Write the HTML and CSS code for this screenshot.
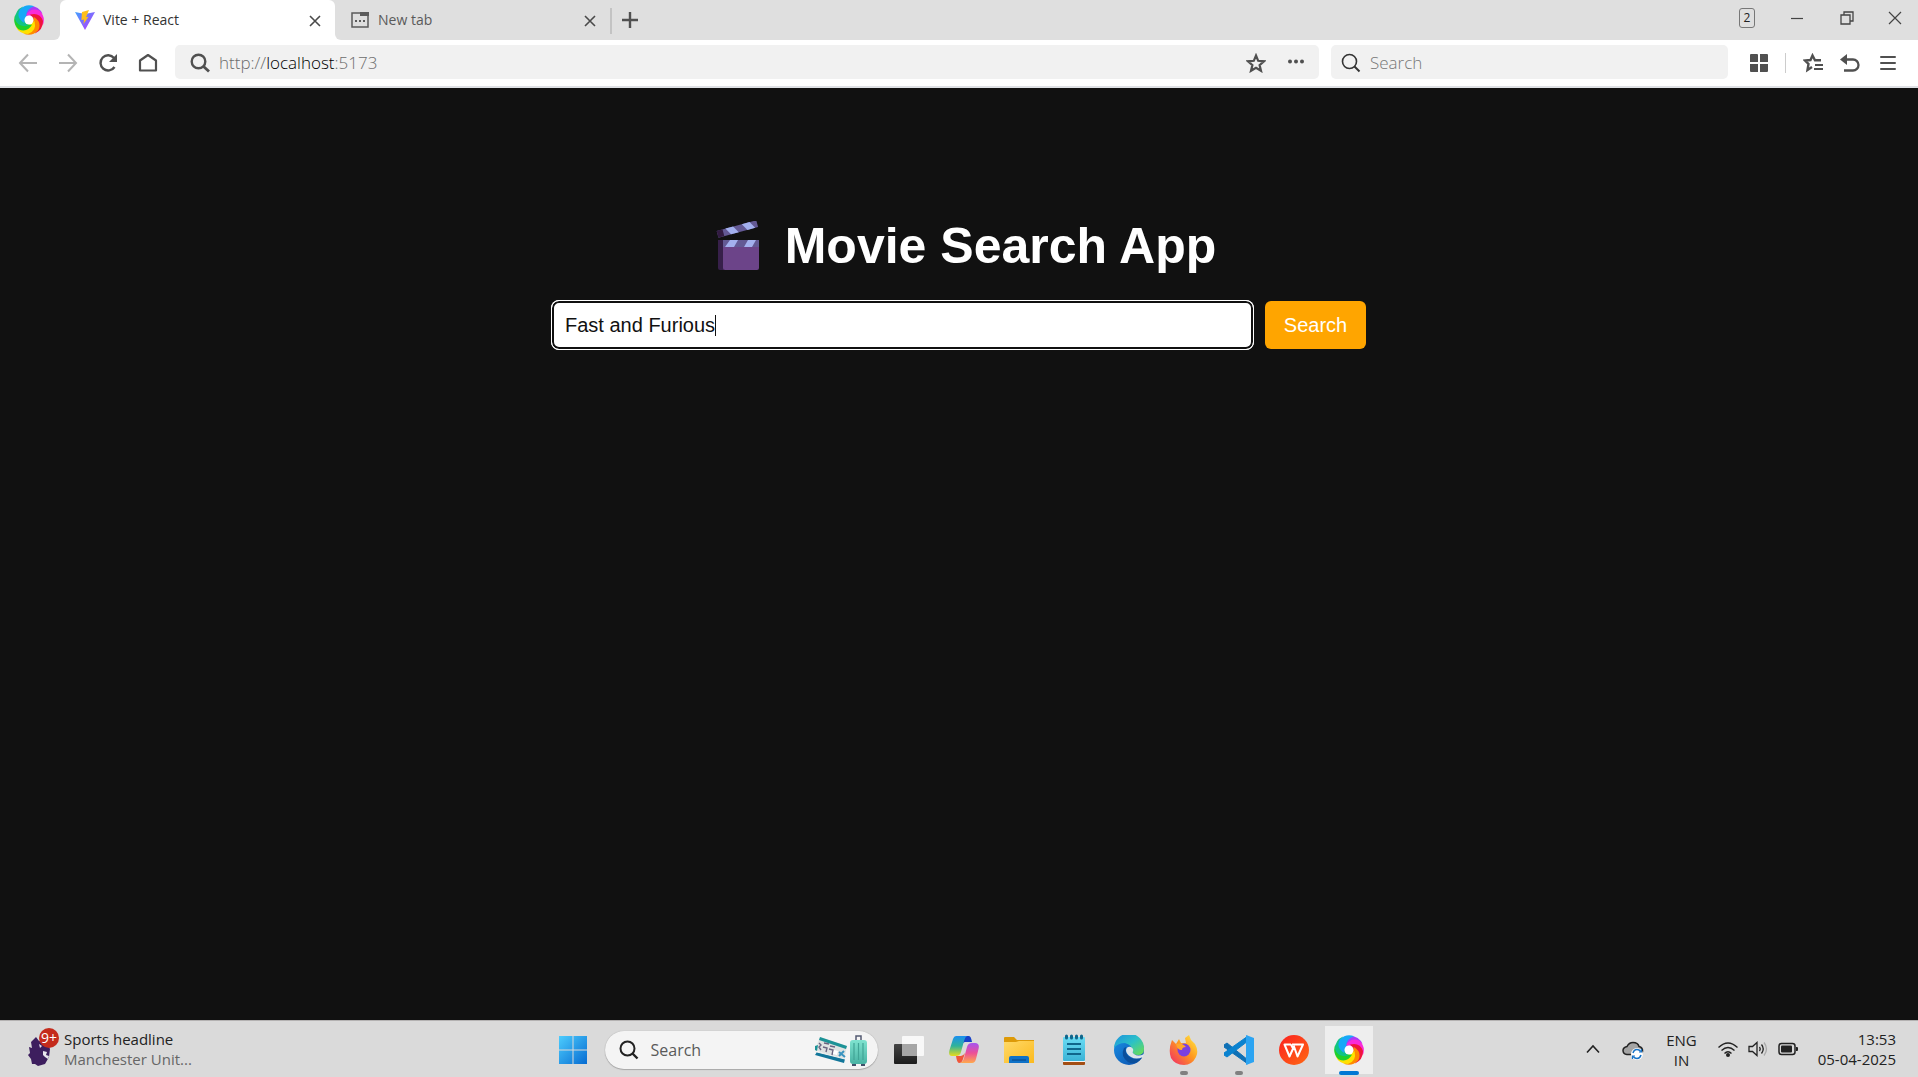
FILE: index.html
```html
<!DOCTYPE html>
<html lang="en">
<head>
<meta charset="utf-8">
<title>Vite + React</title>
<meta name="viewport" content="width=device-width, initial-scale=1">
<link rel="stylesheet" href="styles.css">
</head>
<body>
<svg class="defs" aria-hidden="true">
  <defs>
    <path id="blade" d="M9.500 14Q7 4 16 1Q25 1 28.500 9Q21 5 15.500 10.500Q12 11 9.500 14z"/>
    <symbol id="swirl" viewBox="0 0 30 30">
      <use href="#blade" fill="#a63cf8"/>
      <use href="#blade" fill="#f92ad8" transform="rotate(45 15 15)"/>
      <use href="#blade" fill="#f0143c" transform="rotate(90 15 15)"/>
      <use href="#blade" fill="#ff8a00" transform="rotate(135 15 15)"/>
      <use href="#blade" fill="#ffe100" transform="rotate(180 15 15)"/>
      <use href="#blade" fill="#1fd02c" transform="rotate(225 15 15)"/>
      <use href="#blade" fill="#10c486" transform="rotate(270 15 15)"/>
      <use href="#blade" fill="#18a8f8" transform="rotate(315 15 15)"/>
      <circle cx="15" cy="15" r="4.500" fill="#fff"/>
    </symbol>
    <symbol id="close" viewBox="0 0 12 12"><path d="M1 1l10 10M11 1L1 11" stroke="#4a4a4a" stroke-width="1.6" fill="none"/></symbol>
    <linearGradient id="vite-a" x1="0" y1="0" x2="1" y2="1"><stop offset="0" stop-color="#41a1ff"/><stop offset="1" stop-color="#bd34fe"/></linearGradient>
    <linearGradient id="win" gradientUnits="userSpaceOnUse" x1="0" y1="0" x2="30" y2="30"><stop offset="0" stop-color="#4fd0ff"/><stop offset="1" stop-color="#0468d0"/></linearGradient>
    <linearGradient id="cop-a" x1="0" y1="0" x2="0" y2="1"><stop offset="0" stop-color="#1a8ff0"/><stop offset=".5" stop-color="#2fb39a"/><stop offset="1" stop-color="#e8dc1c"/></linearGradient>
    <linearGradient id="cop-b" x1="0" y1="0" x2="0" y2="1"><stop offset="0" stop-color="#a553f0"/><stop offset=".5" stop-color="#ec4f98"/><stop offset="1" stop-color="#ffa94d"/></linearGradient>
    <linearGradient id="fold" x1="0" y1="0" x2="1" y2="1"><stop offset="0" stop-color="#ffd968"/><stop offset="1" stop-color="#fbba1e"/></linearGradient>
    <linearGradient id="pad" x1="0" y1="0" x2="0" y2="1"><stop offset="0" stop-color="#6adcf4"/><stop offset="1" stop-color="#3bb3d6"/></linearGradient>
    <linearGradient id="edge-a" x1="0" y1="0" x2="1" y2="1"><stop offset="0" stop-color="#1c8fe0"/><stop offset=".5" stop-color="#2bc0c8"/><stop offset="1" stop-color="#6fe04a"/></linearGradient>
    <linearGradient id="edge-b" x1="0" y1="0" x2="1" y2="1"><stop offset="0" stop-color="#1a93e8"/><stop offset="1" stop-color="#0a4ba8"/></linearGradient>
    <linearGradient id="fox" x1="1" y1="0" x2="0" y2="1"><stop offset="0" stop-color="#fff04a"/><stop offset=".45" stop-color="#ff9a1e"/><stop offset="1" stop-color="#f0246c"/></linearGradient>
    <linearGradient id="wps" x1="0" y1="0" x2="1" y2="1"><stop offset="0" stop-color="#fb2020"/><stop offset="1" stop-color="#ff6a14"/></linearGradient>
    <linearGradient id="tv" x1="0" y1="0" x2="0" y2="1"><stop offset="0" stop-color="#444"/><stop offset="1" stop-color="#1c1c1c"/></linearGradient>
    <linearGradient id="bag" x1="0" y1="0" x2="0" y2="1"><stop offset="0" stop-color="#7fe3cf"/><stop offset="1" stop-color="#49b3a4"/></linearGradient>
  </defs>
</svg>

<header class="browser">
  <div class="tabstrip">
    <button class="app-logo" aria-label="Browser menu"><svg width="30" height="30"><use href="#swirl"/></svg></button>
    <div class="tab tab-active">
      <svg width="20" height="20" viewBox="0 0 20 20" aria-hidden="true"><path d="M0 2L10 20L20 2L10 4z" fill="url(#vite-a)"/><path d="M14 0L7 2L6.400 10L9 9.500L8.500 14L13.500 6.800L11 7.200z" fill="#ffbf1c"/></svg>
      <span class="tab-title">Vite + React</span>
      <button class="tab-close" aria-label="Close tab"><svg width="12" height="12"><use href="#close"/></svg></button>
    </div>
    <div class="tab">
      <svg width="18" height="16" viewBox="0 0 18 16" aria-hidden="true"><path d="M1 1h16v14H1z" fill="none" stroke="#5c5c5c" stroke-width="1.500"/><path d="M9 0h9v4H9z" fill="#5c5c5c"/><path d="M4 8h2v2H4zM8 8h2v2H8zM12 8h2v2h-2z" fill="#5c5c5c"/></svg>
      <span class="tab-title">New tab</span>
      <button class="tab-close" aria-label="Close tab"><svg width="12" height="12"><use href="#close"/></svg></button>
    </div>
    <button class="new-tab" aria-label="New tab"><svg width="16" height="16" viewBox="0 0 16 16"><path d="M8 0v16M0 8h16" stroke="#505050" stroke-width="2.400"/></svg></button>
    <div class="window-controls">
      <button class="tab-count" aria-label="Open tabs">2</button>
      <button aria-label="Minimise"><svg width="14" height="14" viewBox="0 0 14 14"><path d="M1 7.500h12" stroke="#444" stroke-width="1.200"/></svg></button>
      <button aria-label="Restore"><svg width="14" height="14" viewBox="0 0 14 14"><path d="M1 4h9v9H1zM4 4V1h9v9h-3" fill="none" stroke="#444" stroke-width="1.300"/></svg></button>
      <button aria-label="Close"><svg width="14" height="14" viewBox="0 0 14 14"><path d="M1 1l12 12M13 1L1 13" stroke="#444" stroke-width="1.200"/></svg></button>
    </div>
  </div>
  <div class="toolbar">
    <nav class="nav">
      <button aria-label="Back"><svg width="20" height="20" viewBox="0 0 20 20"><path d="M19 10H2M10 1.500L2 10l8 8.500" fill="none" stroke="#b4b4b4" stroke-width="2"/></svg></button>
      <button aria-label="Forward"><svg width="20" height="20" viewBox="0 0 20 20"><path d="M1 10h17M10 1.500l8 8.500l-8 8.500" fill="none" stroke="#b4b4b4" stroke-width="2"/></svg></button>
      <button aria-label="Reload"><svg width="20" height="20" viewBox="0 0 20 20"><path d="M16 5A7.600 7.600 0 1 0 16.500 14" fill="none" stroke="#505050" stroke-width="2.400"/><path d="M19 1v8h-8z" fill="#505050"/></svg></button>
      <button aria-label="Home"><svg width="20" height="20" viewBox="0 0 20 20"><path d="M2 7.500L10 2l8 5.500V17.500H2z" fill="none" stroke="#505050" stroke-width="2.200" stroke-linejoin="round"/></svg></button>
    </nav>
    <div class="address">
      <svg width="20" height="20" viewBox="0 0 20 20" aria-hidden="true"><circle cx="8.500" cy="8.500" r="6.800" fill="none" stroke="#505050" stroke-width="2.400"/><path d="M13 13l6 5.500" stroke="#505050" stroke-width="2.800"/></svg>
      <a class="url" href="#">http://<span class="host">localhost</span>:5173</a>
      <button aria-label="Bookmark"><svg width="20" height="20" viewBox="0 0 20 20"><path d="M10 2.500l2.200 5.300 5.800.5-4.400 3.800 1.400 5.700-5-3.100-5 3.100 1.400-5.700L2 8.300l5.800-.5z" fill="none" stroke="#505050" stroke-width="2.200"/></svg></button>
      <button aria-label="More"><svg width="18" height="20" viewBox="0 0 18 20"><circle cx="3" cy="8.500" r="2" fill="#505050"/><circle cx="9" cy="8.500" r="2" fill="#505050"/><circle cx="15" cy="8.500" r="2" fill="#505050"/></svg></button>
    </div>
    <label class="quick-search">
      <svg width="20" height="20" viewBox="0 0 20 20" aria-hidden="true"><circle cx="8.500" cy="8.500" r="7" fill="none" stroke="#333" stroke-width="1.600"/><path d="M13.500 13.500l5 5" stroke="#333" stroke-width="2"/></svg>
      <input type="text" placeholder="Search" aria-label="Search the web">
    </label>
    <div class="tools">
      <button aria-label="Apps"><svg width="18" height="18" viewBox="0 0 18 18"><path d="M1 0h6q1 0 1 1v7H0V1q0-1 1-1zM10 0h7q1 0 1 1v7h-8zM0 10h8v8H1q-1 0-1-1zM10 10h8v7q0 1-1 1h-7z" fill="#505050"/></svg></button>
      <span class="divider"></span>
      <button aria-label="Favourites"><svg width="20" height="20" viewBox="0 0 20 20"><path d="M18 7.300h-6L9.500 2.500 7.500 7 2 7.500l3.500 3.500L4.500 17l4.500-3" fill="none" stroke="#505050" stroke-width="2.400"/><path d="M12 12h8M11 16h9" stroke="#505050" stroke-width="2.200"/></svg></button>
      <button aria-label="Undo"><svg width="20" height="20" viewBox="0 0 20 20"><path d="M3 6.500h10a5.500 5.500 0 0 1 0 11H4" fill="none" stroke="#505050" stroke-width="2.300"/><path d="M0 6.500L7 1v11z" fill="#505050"/></svg></button>
      <button class="menu" aria-label="Menu"><svg width="16" height="16" viewBox="0 0 16 16"><path d="M1 2h14M1 8h14M1 14h14" stroke="#505050" stroke-width="2" stroke-linecap="round"/></svg></button>
    </div>
  </div>
</header>

<main class="page">
  <h1 class="title">
    <svg width="69" height="50" viewBox="0 0 69 50" aria-hidden="true">
      <g transform="translate(1 -1)">
        <g transform="rotate(-15 14 16)">
          <path d="M15 11h41v7H15z" fill="#635994"/><path d="M15 11h6v7h-6z" fill="#321b41"/>
          <path d="M24 11h8l4 7h-8zM41 11h8l4 7h-8z" fill="#a3b0ee"/>
        </g>
        <path d="M15 20h6v30h-4q-2 0-2-2z" fill="#37204a"/>
        <path d="M20 20h36v28q0 2-2 2H22q-2 0-2-2z" fill="#6c4489"/>
        <path d="M20 20h36v7H20z" fill="#635994"/>
        <path d="M27 20h8l-4 7h-9zM45 20h8l-4 7h-8z" fill="#a3b0ee"/>
      </g>
    </svg>
    Movie Search App
  </h1>
  <form class="search-form" onsubmit="return false">
    <div class="field"><input type="text" class="movie-input" value="Fast and Furious" aria-label="Movie title"><span class="caret" aria-hidden="true"></span></div>
    <button class="movie-button" type="submit">Search</button>
  </form>
</main>

<footer class="taskbar">
  <button class="widget">
    <span class="crest">
      <svg width="26" height="32" viewBox="0 0 26 32" aria-hidden="true"><path d="M4 8l5-5 3 4 8 1 3 7-1 8-4 7-7 2-3-2-3 0-1-5-3-4 2-2-1-6 3 1z" fill="#3d1e5e"/><path d="M16 17l4 1-1 3 3 1-1 3-3-2-2-2zM12 10l3 2-2 2z" fill="#e8e4ee"/></svg>
      <span class="badge">9+</span>
    </span>
    <span class="widget-text"><span class="headline">Sports headline</span><span class="subline">Manchester Unit...</span></span>
  </button>
  <div class="dock">
    <button class="app" aria-label="Start"><svg width="30" height="30" viewBox="0 0 30 30"><path d="M1 1h13.500v13.500H1zM15.500 1H29v13.500H15.500zM1 15.500h13.500V29H1zM15.500 15.500H29V29H15.500z" fill="url(#win)"/></svg></button>
    <label class="task-search">
      <svg width="20" height="20" viewBox="0 0 20 20" aria-hidden="true"><circle cx="8.500" cy="8.500" r="7" fill="none" stroke="#222" stroke-width="2"/><path d="M13.500 13.500l5 5" stroke="#222" stroke-width="2.400"/></svg>
      <input type="text" placeholder="Search" aria-label="Search Windows">
      <svg width="54" height="32" viewBox="0 0 54 32" aria-hidden="true">
        <path d="M6 3l27 9-3 14L1 16z" fill="#dfe3e2"/><path d="M6 3l27 9-1 3L5 6z" fill="#1c9296"/><path d="M1 12l3-1-1 6-2-1z" fill="#1c9296"/>
        <path d="M3 18l28 7-1 4L1 21z" fill="#12769a"/><path d="M3 18l28 7" stroke="#f4f4f2"/>
        <path d="M5 9l2 2-2 2 2 3M10 9l5 1M9 13l4 1-1 4M16 12l5 1M15 15l4 1-1 5" stroke="#6a6480" stroke-width="1.400" fill="none"/><path d="M20 16l4 1-1 4-4-1z" fill="#fff"/><path d="M25 18l6 5M30 17l-5 5" stroke="#3b94c0" stroke-width="2"/>
        <path d="M42 7V2h5v5" fill="none" stroke="#535a72" stroke-width="1.500"/><rect x="36" y="6" width="17" height="24" rx="3" fill="url(#bag)"/><path d="M40 9v17M44.500 9v17M49 9v17" stroke="#41a596" stroke-width="1.200"/><path d="M38 30h4v2h-4zM47 30h4v2h-4z" fill="#41506a"/>
      </svg>
    </label>
    <button class="app" aria-label="Task view"><svg width="30" height="30" viewBox="0 0 30 30"><rect x="0" y="9" width="23" height="20" rx="1" fill="url(#tv)"/><rect x="8" y="1" width="22" height="20" rx="1" fill="#fff" opacity=".8"/><path d="M8 9h15v12H8z" fill="#a6a6a6"/></svg></button>
    <button class="app" aria-label="Copilot"><svg width="30" height="30" viewBox="0 0 30 30"><path d="M16 1h4q2 0 3 6h-7q-3 0-4 6z" fill="#1742c8"/><path d="M7 1h11q-2 1-3 5l-3 11q-1 4-5 4H3q-4 0-2.500-6L4 4q1-3 3-3z" fill="url(#cop-a)"/><path d="M23 8h3q5 0 3.500 6L27 24q-1 4-4 4H11q3-1 4-5l3-11q1-4 5-4z" fill="url(#cop-b)"/><path d="M7 21h5q2 0 4-3l-2 6q-1 4-4 4-2 0-3-7z" fill="#f0563a"/></svg></button>
    <button class="app" aria-label="File Explorer"><svg width="30" height="30" viewBox="0 0 30 30"><path d="M0 3q0-1 1-1h9l3 3h17v5H0z" fill="#dd9a08"/><path d="M0 7h12l3-1h15v22H0z" fill="url(#fold)"/><path d="M5 28v-5q0-2 2-2h16q2 0 2 2v5z" fill="#0f72c8"/><path d="M8 25h14" stroke="#0a4b8c" stroke-width="1.200"/></svg></button>
    <button class="app" aria-label="Notepad"><svg width="30" height="32" viewBox="0 0 30 32"><path d="M4 28h22v2q0 1-1 1H5q-1 0-1-1z" fill="#a34e14"/><path d="M4 26h22v2H4z" fill="#f4f4f4"/><rect x="4" y="3" width="22" height="24" rx="1" fill="url(#pad)"/><path d="M8 10h14M8 15h14M8 20h14" stroke="#10668c" stroke-width="2"/><path d="M7.500 2v2M12.500 2v2M17.500 2v2M22.500 2v2" stroke="#10668c" stroke-width="3" stroke-linecap="round"/></svg></button>
    <button class="app" aria-label="Edge"><svg width="30" height="30" viewBox="0 0 30 30"><circle cx="15" cy="15" r="15" fill="url(#edge-b)"/><path d="M0 13A15 15 0 0 1 30 14Q30 20 24 20Q18 20 19 16Q18 10 11 8Q4 8 0 13z" fill="url(#edge-a)"/><path d="M10 13q-4 8 4 14 6 3 11-1l3-3q-6 2-11 0-7-4-5-11z" fill="#0a4f9c"/><path d="M12 15q1-4 5-3 3 2 2 4-1 2 1 3 4 3 10 0l-1 3q-7 3-12 0-5-3-5-7z" fill="#dce4ea"/></svg></button>
    <button class="app running" aria-label="Firefox"><svg width="30" height="30" viewBox="0 0 30 30"><path d="M3 5l4 4 3-5 2 4 5 0-1-5 4-3 2 5 4 4q4 7 1 13-4 8-12 8-9 0-13-7-3-8 1-18z" fill="url(#fox)"/><circle cx="15" cy="15" r="6.500" fill="#7b3fe0"/><path d="M7 9q6-2 10 3-4 0-4 3-5 0-6-6z" fill="#ffa52c"/></svg></button>
    <button class="app running" aria-label="Visual Studio Code"><svg width="30" height="30" viewBox="0 0 30 30"><path d="M0 10l3-2 21 17v4L0 12z" fill="#0f70b5" stroke="#0f70b5"/><path d="M0 20l3 2L24 6V1L0 18z" fill="#0a82cf" stroke="#0a82cf"/><path d="M22 0l8 3v24l-8 3z" fill="#2ba4f2"/></svg></button>
    <button class="app" aria-label="WPS Office"><svg width="30" height="30" viewBox="0 0 30 30"><circle cx="15" cy="15" r="15" fill="url(#wps)"/><path d="M12 9.500H5.500l5 12 4.500-10 3.500 10 5.500-12H13M12 9.500l2 4" fill="none" stroke="#fff" stroke-width="2" stroke-linejoin="round"/></svg></button>
    <button class="app current" aria-label="Browser"><svg width="30" height="30"><use href="#swirl"/></svg></button>
  </div>
  <div class="tray">
    <button aria-label="Hidden icons"><svg width="14" height="14" viewBox="0 0 14 14"><path d="M1 10.500L7 4l6 6.500" fill="none" stroke="#222" stroke-width="1.600"/></svg></button>
    <button class="cloud" aria-label="OneDrive"><svg width="22" height="20" viewBox="0 0 22 20"><path d="M5 14.500q-4-.5-4-4 0-3 4-4 2-4 6-4 5 0 6 4 4 1 3.500 5l-1 3z" fill="#a4a4a4" stroke="#222" stroke-width="1.500"/><circle cx="15" cy="14" r="6" fill="#fff"/><path d="M11 13q1-3.500 4-3.500 2 0 4 2M19 15q-1 3.500-4 3.500-2 0-4-2" fill="none" stroke="#1673c8" stroke-width="1.500"/><path d="M19.500 9v3H17M10.500 19v-3H13" fill="none" stroke="#1673c8" stroke-width="1.200"/></svg></button>
    <button class="lang">ENG<br>IN</button>
    <button class="status" aria-label="Network, volume and battery">
      <svg width="20" height="20" viewBox="0 0 20 20"><g fill="none" stroke="#222" stroke-width="1.400"><path d="M.500 8.500q9.500-9 19 0"/><path d="M3.500 11.500q6.500-6 13 0"/><path d="M6.500 14.500q3.500-3.500 7 0"/></g><circle cx="10" cy="16" r="2" fill="#222"/></svg>
      <svg width="20" height="20" viewBox="0 0 20 20"><g fill="none" stroke="#222" stroke-width="1.300"><path d="M1 7.500h3.500L9 3.500v13L4.500 12.500H1z"/><path d="M11.500 8q1.500 2 0 4M13.500 5.500q3.500 4.500 0 9"/></g><path d="M16 3.500q5 6.500 0 13" fill="none" stroke="#aaa" stroke-width="1.300"/></svg>
      <svg width="20" height="20" viewBox="0 0 20 20"><rect x="1" y="4.500" width="16" height="11" rx="2.500" fill="none" stroke="#222" stroke-width="1.500"/><rect x="3" y="6.500" width="11" height="7" rx="1" fill="#222"/><path d="M18 8h1q1 0 1 1v2q0 1-1 1h-1z" fill="#222"/></svg>
    </button>
    <time class="clock" datetime="2025-04-05T13:53">13:53<br>05-04-2025</time>
  </div>
</footer>
</body>
</html>
```
FILE: styles.css
```css
* { box-sizing: border-box; }
body {
  margin: 0;
  min-height: 100vh;
  display: flex;
  flex-direction: column;
  background: #111;
  font: 14px/20px "Open Sans", "Noto Sans", sans-serif;
  color: #222;
}
button { border: 0; padding: 0; background: none; font: inherit; color: inherit; display: flex; align-items: center; justify-content: center; }
input { border: 0; padding: 0; background: none; outline: none; font: inherit; color: inherit; min-width: 0; }
svg { display: block; flex: none; }
.defs { position: absolute; width: 0; height: 0; }

/* browser window */
.tabstrip { display: flex; height: 40px; background: #fff; }
.app-logo { width: 60px; padding-right: 2px; background: #dfdfdf; border-bottom-right-radius: 6px; }
.tab { display: flex; align-items: center; gap: 9px; width: 275px; padding: 0 13px 0 16px; background: #dfdfdf; color: #5a5a5a; border-bottom-left-radius: 6px; }
.tab-active { gap: 8px; background: #fff; color: #333; padding-left: 15px; border-radius: 6px 6px 0 0; box-shadow: 0 -6px 0 #dfdfdf; }
.tab-title { flex: 1; }
.tab-close { width: 14px; height: 14px; margin-top: 2px; }
.new-tab { width: 40px; background: linear-gradient(#c3c3c3, #c3c3c3) 0 8px / 2px 26px no-repeat #dfdfdf; }
.window-controls { flex: 1; display: flex; justify-content: flex-end; align-items: center; padding-bottom: 4px; background: #dfdfdf; }
.window-controls button { width: 50px; height: 36px; }
.window-controls button:last-child { width: 46px; }
.window-controls .tab-count { width: 16px; height: 20px; margin-right: 17px; border: 1px solid #777; border-radius: 3px; font-size: 12px; line-height: 18px; }
.toolbar { display: flex; align-items: center; height: 48px; padding: 0 14px 2px; border-bottom: 2px solid #dfe1e5; background: #fff; }
.nav { display: flex; gap: 20px; padding: 2px 17px 0 4px; }
.address, .quick-search { display: flex; align-items: center; gap: 9px; height: 34px; border-radius: 5px; background: #f1f1f1; font-size: 17px; font-weight: 300; }
.address { flex: 1; padding: 2px 14px 0 15px; }
.url { flex: 1; color: #6c6c6c; text-decoration: none; }
.host { color: #000; }
.address button + button { margin-left: 12px; }
.quick-search { width: 397px; margin-left: 12px; padding: 2px 10px 0; }
.quick-search input { flex: 1; }
.quick-search input::placeholder { color: #777; opacity: 1; }
.tools { display: flex; align-items: center; gap: 17px; padding: 2px 8px 0 22px; }
.divider { width: 1px; height: 20px; background: #ccc; }
.menu { margin-left: 3px; }

/* page */
.page { flex: 1; padding: 128px 20px 20px; font-family: "Liberation Sans", Arial, sans-serif; }
.title { display: flex; justify-content: center; align-items: center; gap: 14px; margin: 0 0 25px; font-size: 50px; line-height: 60px; color: #fff; }
.search-form { display: flex; gap: 12px; max-width: 814px; margin: 0 auto; font-size: 20px; line-height: 24px; }
.field { flex: 1; position: relative; display: flex; }
.movie-input { flex: 1; height: 48px; padding: 0 11px; border: 2px solid #101010; border-radius: 7px; outline: 1px solid #fff; background: #fff; color: #111; box-shadow: 0 0 0 1px #fff; }
.caret { position: absolute; left: 163px; top: 14px; width: 1px; height: 21px; background: #111; }
.movie-button { width: 101px; height: 48px; border-radius: 6px; background: #ffa500; color: #fff; }

/* taskbar */
.taskbar { display: grid; grid-template-columns: 1fr auto 1fr; align-items: center; height: 57px; padding-left: 4px; border-top: 1px solid #b4b2b2; background: #dadada; font-size: 15px; }
.widget { display: flex; justify-content: flex-start; gap: 11px; padding-left: 23px; text-align: left; }
.crest { position: relative; padding-top: 2px; }
.badge { position: absolute; left: 12px; top: -4px; width: 20px; height: 20px; border-radius: 50%; background: #c42b1c; color: #fff; font-size: 14px; line-height: 20px; text-align: center; }
.widget-text { display: grid; }
.subline { color: #666; }
.dock { display: flex; align-items: center; height: 56px; padding-top: 2px; }
.app { width: 55px; height: 54px; position: relative; }
.task-search { display: flex; align-items: center; gap: 12px; width: 273px; height: 38px; margin: 0 4px; padding: 0 10px 0 14px; border-radius: 19px; background: #f4f4f4; box-shadow: 0 0 1px #999, 0 1px 1px #aaa; }
.task-search input { flex: 1; font-size: 16px; }
.task-search input::placeholder { color: #5a5a5a; opacity: 1; }
.running::after, .current::after { content: ""; position: absolute; bottom: 2px; width: 8px; height: 4px; border-radius: 2px; background: #808080; }
.current { background: linear-gradient(#eee, #eee) center / 48px 48px no-repeat; }
.current::after { width: 20px; background: #0078d4; }
.tray { display: flex; align-items: center; justify-content: flex-end; padding-right: 22px; }
.cloud { margin-left: 22px; padding-top: 2px; }
.lang { margin: 0 21px 0 22px; padding-top: 2px; }
.status { gap: 10px; margin-right: 20px; }
.clock { text-align: right; }
```
